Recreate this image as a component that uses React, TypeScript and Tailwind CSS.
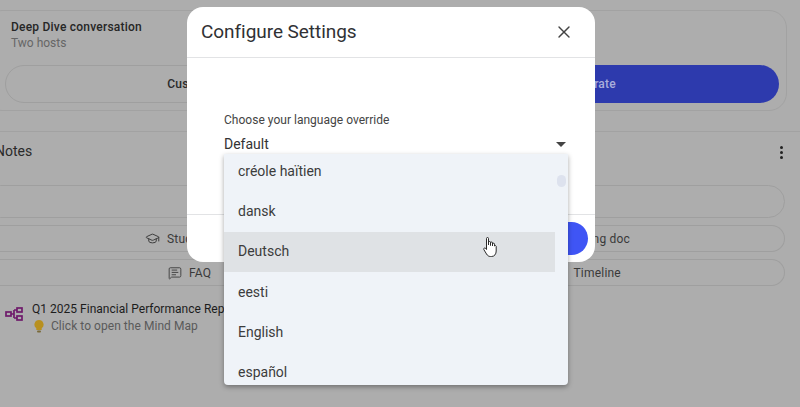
import { GraduationCap, MessageSquareText, X } from "lucide-react";

const langs = ["créole haïtien", "dansk", "Deutsch", "eesti", "English", "español"];

function Pill({ children, className = "" }: { children?: React.ReactNode; className?: string }) {
  return (
    <div className={"flex items-center justify-center rounded-full border border-[#9f9f9f] text-[12px] tracking-[0.2px] text-[#3a3a3a] " + className}>
      {children}
    </div>
  );
}

export default function App() {
  return (
    <div className="relative h-[407px] w-[800px] overflow-hidden bg-[#adadad] font-['Roboto',sans-serif]">
      <div className="flex h-full flex-col pt-[10px]">
        <div className="ml-[-16px] mr-[13px] flex h-[101px] flex-col rounded-[18px] border border-[#a2a2a2] pl-[26px] pr-[7px] pt-[8px]">
          <div className="text-[12px] font-medium leading-[16px] tracking-[0.22px] text-[#262626]">Deep Dive conversation</div>
          <div className="text-[12px] leading-[17px] text-[#666]">Two hosts</div>
          <div className="ml-[-6px] mt-[13px] flex gap-[10px]">
            <Pill className="h-[38px] w-[380px] pl-[4px] font-medium">
              <span className="text-[#2a2a2a]">Customize</span>
            </Pill>
            <div className="flex h-[38px] w-[385px] items-center justify-center rounded-full bg-[#2d3aad] pl-[8px] text-[12px] font-medium tracking-[0.2px] text-[#a9aedb]">Generate</div>
          </div>
        </div>
        <div className="mt-[20px] flex h-[41px] items-start justify-between border-t border-[#a2a2a2] pr-[17px] pt-[10px]">
          <span className="ml-[-5px] text-[14px] leading-[18px] text-[#2a2a2a]">Notes</span>
          <div className="mt-[4px] flex flex-col gap-[2px]">
            <span className="h-[3px] w-[3px] rounded-full bg-[#222]" />
            <span className="h-[3px] w-[3px] rounded-full bg-[#222]" />
            <span className="h-[3px] w-[3px] rounded-full bg-[#222]" />
          </div>
        </div>
        <div className="ml-[-16px] mr-[15px] mt-[13px] flex flex-col">
          <Pill className="h-[33px] rounded-[14px]" />
          <div className="mt-[7px] flex h-[27px]">
            <Pill className="h-[27px] w-[50%] gap-[7px] !justify-start rounded-r-none border-r-0 pl-[160px]">
              <GraduationCap size={15} strokeWidth={1.6} className="text-[#3f3f3f]" />
              <span>Study guide</span>
            </Pill>
            <Pill className="h-[27px] w-[50%] !justify-start rounded-l-none border-l-0 pl-[179px]">Briefing doc</Pill>
          </div>
          <div className="mt-[7px] flex h-[27px]">
            <Pill className="h-[27px] w-[50%] gap-[7px] !justify-start rounded-r-none border-r-0 pl-[183px]">
              <MessageSquareText size={14} strokeWidth={1.6} className="text-[#3f3f3f]" />
              <span>FAQ</span>
            </Pill>
            <Pill className="h-[27px] w-[50%] !justify-start rounded-l-none border-l-0 pl-[189px]">Timeline</Pill>
          </div>
        </div>
        <div className="ml-[5px] mt-[15px] flex gap-[9px]">
          <svg width="18" height="16" viewBox="0 0 18 16" fill="none" stroke="#6f1a6b" strokeWidth="1.7" className="mt-[5px]">
            <rect x="1" y="6" width="5" height="4" />
            <rect x="12" y="2" width="5" height="4" />
            <rect x="12" y="10" width="5" height="4" />
            <path d="M6 8h3M9 4v8M9 4h3M9 12h3" />
          </svg>
          <div className="flex flex-col">
            <span className="whitespace-nowrap text-[12px] leading-[17px] tracking-[0.02px] text-[#1c1c1c]">Q1 2025 Financial Performance Report</span>
            <span className="flex items-center gap-[7px] text-[12px] leading-[17px] tracking-[0.05px] text-[#5a5a5a]">
              <svg width="10" height="13" viewBox="0 0 10 13" className="ml-[2px]">
                <path d="M5 0a4.6 4.6 0 0 0-2.7 8.3V10h5.4V8.3A4.6 4.6 0 0 0 5 0Z" fill="#b8901f" />
                <rect x="3" y="10.6" width="4" height="2" rx="1" fill="#7a6a3a" />
              </svg>
              Click to open the Mind Map
            </span>
          </div>
        </div>
      </div>

      {/* modal */}
      <div className="absolute left-[187px] top-[7px] flex h-[255px] w-[408px] flex-col rounded-[16px] bg-white">
        <div className="flex h-[51px] shrink-0 items-center justify-between border-b border-[#e2e3e5] pl-[14px] pr-[21px]">
          <span className="font-['Roboto',sans-serif] text-[19px] leading-[26px] tracking-[-0.05px] text-[#303134]">Configure Settings</span>
          <X size={20} strokeWidth={1.7} className="text-[#444]" />
        </div>
        <div className="flex flex-1 flex-col pl-[37px] pr-[29px] pt-[54px]">
          <div className="text-[12px] leading-[16px] tracking-[0.02px] text-[#444]">Choose your language override</div>
          <div className="mt-[7px] flex items-center justify-between">
            <span className="text-[14px] leading-[18px] text-[#333]">Default</span>
            <span className="h-0 w-0 border-x-[5px] border-t-[5px] border-x-transparent border-t-[#444]" />
          </div>
        </div>
        <div className="flex h-[48px] shrink-0 justify-end border-t border-[#e2e3e5] pr-[7px] pt-[7px]">
          <div className="h-[33px] w-[120px] rounded-full bg-[#3f55f5]" />
        </div>
      </div>

      {/* dropdown */}
      <div className="absolute left-[224px] top-[154px] h-[231px] w-[344px] overflow-hidden rounded-b-[4px] bg-[#eff3f8] shadow-[0_2px_5px_rgba(0,0,0,0.35)]">
        <div className="mt-[-2.6px] flex w-[331px] flex-col">
          {langs.map((l) => (
            <div key={l} className={"flex h-[40.2px] shrink-0 items-center pl-[14px] text-[14px] text-[#3c3c3c] " + (l === "Deutsch" ? "bg-[#dfe2e5]" : "")}>
              {l}
            </div>
          ))}
        </div>
        <div className="absolute left-[333px] top-[21px] h-[12px] w-[9px] rounded-full bg-[#dde2ee]" />
      </div>

      {/* cursor */}
      <svg width="15" height="21" viewBox="0 0 15 21" className="absolute left-[483px] top-[237px]" fill="#ffffff" stroke="#2b2b2b" strokeWidth="1" strokeLinejoin="round">
        <path d="M3.5 1.5a1 1 0 0 1 2 0V8V5.5a1 1 0 0 1 2 0V8.5V6a1 1 0 0 1 2 0V9V7.2a1 1 0 0 1 2 0V9a1 1 0 0 1 1.7 0.3V14c0 3-1.7 5.5-4.7 5.5H7.5C5.5 19.500 4.500 18.500 3.500 17L0.800 12.500C0.300 11.500 1.700 10.300 2.600 11.300L3.500 12.500Z" />
      </svg>
    </div>
  );
}
